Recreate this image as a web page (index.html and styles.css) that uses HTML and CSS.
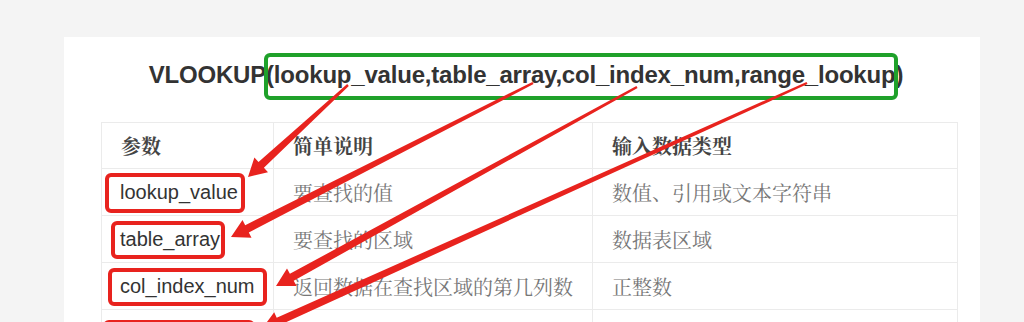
FILE: index.html
```html
<!DOCTYPE html>
<html lang="zh">
<head>
<meta charset="utf-8">
<title>VLOOKUP</title>
<link rel="stylesheet" href="styles.css">
</head>
<body>
<div class="page">
  <div class="card">
    <h1 class="title">VLOOKUP(lookup_value,table_array,col_index_num,range_lookup)</h1>
    <table class="params">
      <colgroup>
        <col class="c1"><col class="c2"><col class="c3">
      </colgroup>
      <thead>
        <tr><th>参数</th><th>简单说明</th><th>输入数据类型</th></tr>
      </thead>
      <tbody>
        <tr><td class="name">lookup_value</td><td>要查找的值</td><td>数值、引用或文本字符串</td></tr>
        <tr><td class="name">table_array</td><td>要查找的区域</td><td>数据表区域</td></tr>
        <tr><td class="name">col_index_num</td><td>返回数据在查找区域的第几列数</td><td>正整数</td></tr>
        <tr><td class="name">range_lookup</td><td>模糊匹配/精确匹配</td><td>TRUE/FALSE（或不填）</td></tr>
      </tbody>
    </table>
  </div>
  <svg class="marks" width="1024" height="322" viewBox="0 0 1024 322" xmlns="http://www.w3.org/2000/svg">
    <g fill="none" stroke-width="4">
      <rect x="266" y="55" width="630" height="43" rx="4" stroke="#1fa12a"/>
      <rect x="107" y="175" width="136" height="36" rx="4" stroke="#e8231e"/>
      <rect x="113" y="223" width="110" height="34" rx="4" stroke="#e8231e"/>
      <rect x="110" y="270" width="155" height="34" rx="4" stroke="#e8231e"/>
      <rect x="105" y="322" width="148" height="30" rx="4" stroke="#e8231e"/>
    </g>
    <g fill="#e8231e">
      <polygon points="348.8,85.9 263.9,167.7 268.0,172.2 248,177 254.4,157.4 258.5,161.9 347.2,84.1"/>
      <polygon points="533.6,84.1 248.8,232.4 251.5,237.7 231,237 242.5,219.9 245.2,225.2 532.4,81.9"/>
      <polygon points="637.6,88.1 293.7,280.8 296.6,286.1 276,286 287.0,268.5 289.9,273.8 636.4,85.9"/>
      <polygon points="807.5,84.1 279.9,325.0 282.4,330.5 261.9,328.8 274.2,312.3 276.7,317.8 806.5,81.9"/>
    </g>
  </svg>
</div>
</body>
</html>
```

FILE: styles.css
```css
html, body {
  margin: 0;
  padding: 0;
}
body {
  background: #f4f4f4;
  font-family: "Liberation Sans", Arial, sans-serif;
}
.page {
  position: relative;
  width: 1024px;
  padding-top: 37px;
}
.card {
  margin-left: 64px;
  width: 916px;
  box-sizing: border-box;
  background: #ffffff;
  padding: 20px 23px 40px 37px;
}
.title {
  margin: 0 0 29px 0;
  padding-right: 6px;
  text-align: center;
  font-family: "Liberation Sans", Arial, sans-serif;
  font-weight: bold;
  font-size: 24px;
  letter-spacing: -0.2px;
  line-height: 36px;
  color: #333333;
}
.params {
  border-collapse: collapse;
  width: 856px;
  table-layout: fixed;
}
.c1 { width: 172px; }
.c2 { width: 319px; }
.c3 { width: 365px; }
.params th,
.params td {
  border: 1px solid #ebebeb;
  padding: 0 19px;
  text-align: left;
  font-size: 20px;
  white-space: nowrap;
  overflow: hidden;
}
.params th {
  height: 45px;
  font-family: "Noto Serif CJK SC", "Noto Sans CJK SC", serif;
  font-weight: bold;
  color: #444444;
}
.params td {
  height: 46px;
  font-family: "Noto Serif CJK SC", "Noto Sans CJK SC", serif;
  color: #777777;
}
.params td.name {
  font-family: "Liberation Sans", Arial, sans-serif;
  color: #333333;
  padding-left: 18px;
}
.marks {
  position: absolute;
  left: 0;
  top: 0;
  pointer-events: none;
}
```
